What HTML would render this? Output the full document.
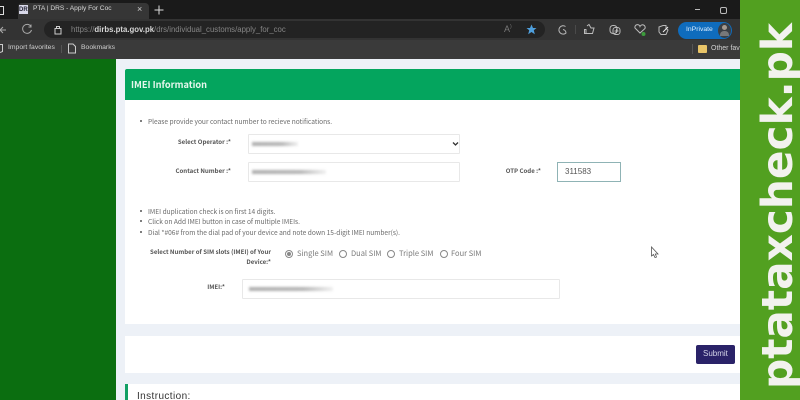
<!DOCTYPE html>
<html>
<head>
<meta charset="utf-8">
<style>
html,body{margin:0;padding:0;width:800px;height:400px;overflow:hidden;background:#fff;font-family:"Liberation Sans",sans-serif}
.a{position:absolute}
#stage{position:absolute;left:0;top:0;width:800px;height:400px;overflow:hidden;filter:blur(0.35px)}
.t{position:absolute;white-space:nowrap;line-height:1}
.n{font-family:"Noto Sans CJK JP","Liberation Sans",sans-serif}
.inp{position:absolute;background:#fff;border:1px solid #e8e8e8;box-sizing:border-box;border-radius:1px}
.blur{position:absolute;background:linear-gradient(90deg,#b0b0b0,#b5b5b5 65%,#f0f0f0);filter:blur(1.2px);height:4px}
.lab{font-weight:bold;font-size:6.1px;color:#555}
.li{font-size:6.6px;color:#6a6a6a}
.dot{position:absolute;width:2px;height:2px;border-radius:50%;background:#555}
.rad{position:absolute;width:8px;height:8px;border:1px solid #888;border-radius:50%;box-sizing:border-box;background:#fff}
.sim{font-size:7.5px;color:#7a7a7a}
</style>
</head>
<body>
<div id="stage">
  <!-- browser chrome -->
  <div class="a" style="left:0;top:0;width:800px;height:19px;background:#1a1a1a"></div>
  <div class="a" style="left:18px;top:3px;width:131px;height:16px;background:#363636;border-radius:4px 4px 0 0"></div>
  <div class="a" style="left:0;top:19px;width:800px;height:21px;background:#333"></div>
  <div class="a" style="left:0;top:40px;width:800px;height:19px;background:#3a3a3a"></div>
  <div class="a" style="left:44px;top:21px;width:501px;height:17px;background:#232323;border-radius:9px"></div>

  <div class="a" style="left:0;top:6px;width:3px;height:7px;border:1px solid #ddd;border-left:0"></div>
  <div class="a" style="left:19px;top:5px;width:9px;height:9px;background:#d8d8e8"></div>
  <div class="t" style="left:19px;top:7px;font-size:6px;font-weight:bold;color:#223">DR</div>
  <div class="t" style="left:33px;top:6px;font-size:6.6px;color:#d8d8d8">PTA | DRS - Apply For Coc</div>
  <div class="t" style="left:137px;top:5px;font-size:9px;color:#ccc">×</div>
  <svg class="a" style="left:153px;top:4px" width="12" height="12"><path d="M6 1.500V10.500M1.500 6H10.500" stroke="#ddd" stroke-width="1"/></svg>

  <svg class="a" style="left:0;top:23px" width="40" height="14" fill="none" stroke="#aaa" stroke-width="1">
    <path d="M0 7H6M0 7L3 4M0 7L3 10"/>
    <path d="M31 3.500A4.500 4.500 0 1 0 31.500 7M31 1.500V4H28.500"/>
  </svg>
  <svg class="a" style="left:54px;top:25px" width="8" height="10" fill="none" stroke="#ccc"><rect x="1" y="3.500" width="6" height="5.500"/><path d="M2.500 3.500V1.500H5.500V3.500"/></svg>
  <div class="t" style="left:71px;top:26px;font-size:7.8px;color:#858585">https://<span style="color:#d5d5d5;font-weight:bold">dirbs.pta.gov.pk</span>/drs/individual_customs/apply_for_coc</div>

  <div class="t" style="left:504px;top:25px;font-size:9px;color:#777">A<span style="font-size:5px;vertical-align:top">)</span></div>
  <svg class="a" style="left:526px;top:24px" width="11" height="11"><path d="M5.500 0.500L7 4H10.500L7.800 6.300L8.800 10.200L5.500 8L2.200 10.200L3.200 6.300L0.500 4H4Z" fill="#4f9fdc"/></svg>
  <svg class="a" style="left:555px;top:22px" width="120" height="16" fill="none" stroke="#bbb" stroke-width="1">
    <path d="M10.500 4.500A4.200 4.200 0 1 0 11 11A3.500 3.500 0 0 0 8 7.500"/>
    <path d="M20.500 3V12" stroke="#4a4a4a"/>
    <path d="M32 4L34 2.500L36 6H39L37.500 11.500H31V7.500H29.500V11.500H31"/>
    <rect x="55" y="3.500" width="7" height="8" rx="3"/><rect x="58" y="5.500" width="7" height="7" rx="2.500"/><path d="M61.500 7V11M59.500 9H63.500"/>
    <path d="M80 6A2.500 2.500 0 0 1 85 4.500A2.500 2.500 0 0 1 90 6.500L85 11Z"/>
    <circle cx="88.500" cy="12" r="2" fill="#3c9c3c" stroke="none"/>
    <path d="M104 5L108 3.500H111V6.500L113 8L111 12.500H106L104 10Z"/><path d="M108 10L113 5" stroke="#eee"/>
  </svg>
  <div class="a" style="left:678px;top:22px;width:54px;height:17px;background:#0f6cbd;border-radius:9px"></div>
  <div class="t" style="left:686px;top:27px;font-size:6.8px;color:#d8ecff">InPrivate</div>
  <div class="a" style="left:718px;top:23px;width:13px;height:15px;background:#3a3f45;border-radius:50%"></div>
  <div class="a" style="left:722px;top:25px;width:5px;height:5px;background:#a59a90;border-radius:50%"></div>
  <div class="a" style="left:720px;top:31px;width:9px;height:5px;background:#77787a;border-radius:4px 4px 0 0"></div>
  <div class="a" style="left:695px;top:9px;width:5px;height:1px;background:#bbb"></div>
  <div class="a" style="left:720px;top:7px;width:5px;height:5px;border:1px solid #bbb;border-radius:2px"></div>

  <svg class="a" style="left:0;top:43px" width="4" height="11" fill="none" stroke="#ccc"><path d="M0 1.500H2.500V8.500L0 9.500"/></svg>
  <div class="t" style="left:8px;top:45px;font-size:6.8px;color:#d0d0d0">Import favorites</div>
  <div class="a" style="left:61px;top:45px;width:1px;height:8px;background:#555"></div>
  <svg class="a" style="left:68px;top:43px" width="8" height="11" fill="none" stroke="#ccc"><path d="M0.500 1H5L7.500 3.500V10H0.500Z"/></svg>
  <div class="t" style="left:81px;top:45px;font-size:6.8px;color:#d0d0d0">Bookmarks</div>
  <div class="a" style="left:692px;top:44px;width:1px;height:10px;background:#555"></div>
  <div class="a" style="left:698px;top:45px;width:9px;height:8px;background:#e8c468;border-radius:1px"></div>
  <div class="t" style="left:711px;top:45px;font-size:7px;color:#d0d0d0">Other fav</div>

  <!-- page -->
  <div class="a" style="left:0;top:59px;width:116px;height:341px;background:#0b6e10"></div>
  <div class="a" style="left:116px;top:59px;width:624px;height:341px;background:#edf1f7"></div>
  <div class="a" style="left:125px;top:69px;width:615px;height:255px;background:#fff"></div>
  <div class="a" style="left:125px;top:69px;width:615px;height:31px;background:#04a55e;border-radius:2px 0 0 0"></div>
  <div class="t n" style="left:131px;top:80px;font-size:9.2px;font-weight:bold;color:#e4f6ec">IMEI Information</div>

  <div class="dot" style="left:140px;top:120px"></div>
  <div class="t li n" style="left:148px;top:118px">Please provide your contact number to recieve notifications.</div>

  <div class="t lab n" style="right:569px;top:139px">Select Operator :*</div>
  <div class="inp" style="left:248px;top:134px;width:212px;height:20px"></div>
  <div class="blur" style="left:252px;top:142px;width:46px"></div>
  <svg class="a" style="left:452px;top:141px" width="7" height="6"><path d="M1 1.500L3.500 4L6 1.500" fill="none" stroke="#333" stroke-width="1.300"/></svg>

  <div class="t lab n" style="right:569px;top:168px">Contact Number :*</div>
  <div class="inp" style="left:248px;top:162px;width:212px;height:20px"></div>
  <div class="blur" style="left:252px;top:170px;width:74px"></div>

  <div class="t lab n" style="right:259px;top:168px">OTP Code :*</div>
  <div class="a" style="left:557px;top:162px;width:64px;height:20px;box-sizing:border-box;border:1.500px solid #8fb3b5;background:#fff"></div>
  <div class="t" style="left:565px;top:168px;font-size:8px;color:#555">311583</div>

  <div class="dot" style="left:140px;top:210px"></div>
  <div class="t li n" style="left:148px;top:208px">IMEI duplication check is on first 14 digits.</div>
  <div class="dot" style="left:140px;top:220px"></div>
  <div class="t li n" style="left:148px;top:218px">Click on Add IMEI button in case of multiple IMEIs.</div>
  <div class="dot" style="left:140px;top:231px"></div>
  <div class="t li n" style="left:148px;top:229px">Dial *#06# from the dial pad of your device and note down 15-digit IMEI number(s).</div>

  <div class="t lab n" style="right:529px;top:249px">Select Number of SIM slots (IMEI) of Your</div>
  <div class="t lab n" style="right:529px;top:259px">Device:*</div>

  <div class="rad" style="left:285px;top:250px"></div>
  <div class="a" style="left:287px;top:252px;width:4px;height:4px;border-radius:50%;background:#888"></div>
  <div class="t sim n" style="left:297px;top:250px">Single SIM</div>
  <div class="rad" style="left:339px;top:250px"></div>
  <div class="t sim n" style="left:351px;top:250px">Dual SIM</div>
  <div class="rad" style="left:387px;top:250px"></div>
  <div class="t sim n" style="left:399px;top:250px">Triple SIM</div>
  <div class="rad" style="left:440px;top:250px"></div>
  <div class="t sim n" style="left:451px;top:250px">Four SIM</div>

  <div class="t lab n" style="right:575px;top:284px">IMEI:*</div>
  <div class="inp" style="left:242px;top:279px;width:318px;height:20px"></div>
  <div class="blur" style="left:249px;top:287px;width:84px"></div>

  <svg class="a" style="left:650px;top:246px" width="9" height="13"><path d="M1.500 1V10L3.500 8.500L5 11.500L6.500 11L5.300 8H8Z" fill="#fff" stroke="#555" stroke-width="0.800"/></svg>

  <div class="a" style="left:125px;top:336px;width:615px;height:37px;background:#fff"></div>
  <div class="a" style="left:696px;top:345px;width:39px;height:19px;background:#2a2268;border-radius:2px"></div>
  <div class="t" style="left:703px;top:350px;font-size:8px;color:#d5d5e8">Submit</div>

  <div class="a" style="left:125px;top:384px;width:615px;height:16px;background:#fff"></div>
  <div class="a" style="left:125px;top:384px;width:3px;height:16px;background:#12a064"></div>
  <div class="t" style="left:137px;top:392px;font-size:10px;letter-spacing:.4px;color:#333">Instruction:</div>

  <!-- brand strip -->
  <div class="a" style="left:740px;top:0;width:60px;height:400px;background:#52a020"></div>
  <svg class="a" style="left:740px;top:0" width="60" height="400">
    <text transform="translate(52 389) rotate(-90)" font-family="DejaVu Sans" font-weight="bold" font-size="43" fill="#f2f2ee" textLength="366" lengthAdjust="spacingAndGlyphs">ptataxcheck.pk</text>
  </svg>
</div>
</body>
</html>
